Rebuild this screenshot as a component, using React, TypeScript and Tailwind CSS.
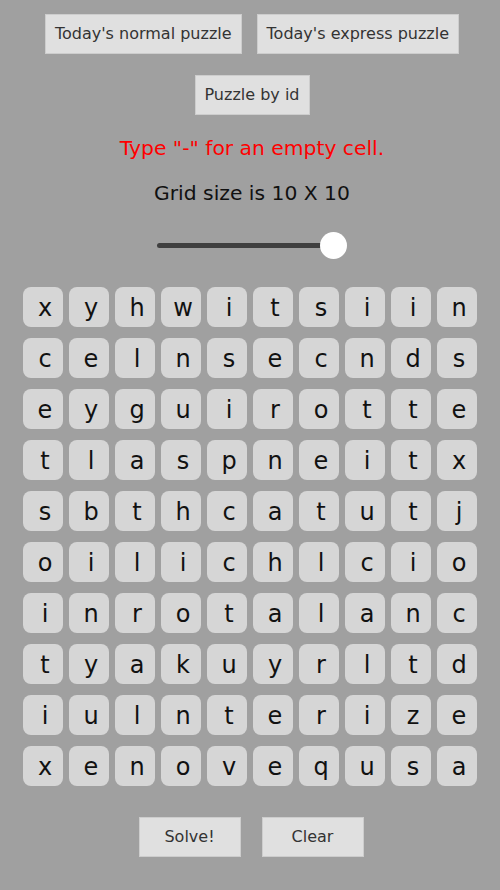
import { useState } from "react";

const ROWS = [
  "xyhwitsiin",
  "celnsecnds",
  "eyguirotte",
  "tlaspneitx",
  "sbthcatutj",
  "oilichlcio",
  "inrotalanc",
  "tyakuyrltd",
  "iulnterize",
  "xenovequsa",
];

const btn =
  "h-10 px-[9px] bg-[#e0e0e0] border border-[#cdcdcd] text-[#333] text-base leading-none";

export default function App() {
  const [size] = useState(10);

  return (
    <div
      className="min-h-[890px] bg-[#a0a0a0] flex flex-col items-center pt-[14px]"
      style={{ fontFamily: '"DejaVu Sans", sans-serif' }}
    >
      <div className="flex gap-[15px] ml-[4px]">
        <button className={btn}>Today's normal puzzle</button>
        <button className={btn}>Today's express puzzle</button>
      </div>
      <button className={`${btn} mt-[21px] ml-[4px]`}>Puzzle by id</button>

      <p className="mt-[21px] text-[20.3px] leading-6 text-[#ff0000] ml-[4px]">
        Type "-" for an empty cell.
      </p>
      <p className="mt-[21px] text-[20.3px] leading-6 text-[#111] ml-[4px]">
        Grid size is {size} X {size}
      </p>

      {/* slider */}
      <div className="mt-[27px] ml-1 relative w-[190px] h-[27px] flex items-center">
        <div className="h-[5px] w-[178px] rounded-full bg-[#3f3f3f]" />
        <div className="absolute right-0 top-0 w-[27px] h-[27px] rounded-full bg-white" />
      </div>

      {/* letter grid */}
      <div className="mt-[28px] grid grid-cols-10 gap-x-[6px] gap-y-[11px]">
        {ROWS.flatMap((row, r) =>
          row.split("").map((ch, c) => (
            <div
              key={`${r}-${c}`}
              className="w-10 h-10 pl-1 pt-[2px] rounded-lg bg-[#d6d6d6] flex items-center justify-center text-[24px] text-[#111]"
            >
              {ch}
            </div>
          )),
        )}
      </div>

      <div className="mt-[31px] flex gap-[21px] ml-[2px]">
        <button className={`${btn} w-[102px]`}>Solve!</button>
        <button className={`${btn} w-[102px]`}>Clear</button>
      </div>
    </div>
  );
}
